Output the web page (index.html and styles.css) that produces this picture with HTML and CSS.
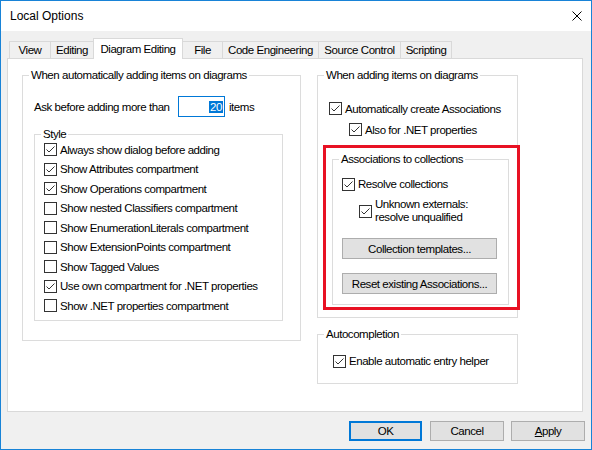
FILE: index.html
```html
<!DOCTYPE html>
<html>
<head>
<meta charset="utf-8">
<title>Local Options</title>
<link rel="stylesheet" href="styles.css">
</head>
<body>
<div class="window">
  <div class="titlebar">
    <span class="title">Local Options</span>
    <svg class="close" viewBox="0 0 10 10" width="10" height="10"><path d="M0.5 0.5 L9.5 9.5 M9.5 0.5 L0.5 9.5" stroke="#000" stroke-width="1" fill="none"/></svg>
  </div>
  <div class="client">
    <div class="tabs">
      <div class="tab t-view">View</div>
      <div class="tab t-edit">Editing</div>
      <div class="tab t-diag sel">Diagram Editing</div>
      <div class="tab t-file">File</div>
      <div class="tab t-code">Code Engineering</div>
      <div class="tab t-src">Source Control</div>
      <div class="tab t-scr last">Scripting</div>
    </div>
    <div class="panel">
      <fieldset class="group g-auto">
        <legend>When automatically adding items on diagrams</legend>
        <div class="ask-row">
          <span class="ask-label">Ask before adding more than</span>
          <span class="num"><span class="numsel">20</span></span>
          <span class="items">items</span>
        </div>
        <fieldset class="group g-style">
          <legend>Style</legend>
          <div class="list">
            <div class="chk"><span class="box"><svg viewBox="0 0 11 11" width="11" height="11"><path d="M1.5 5.5 L4 8 L9.5 2.5" fill="none" stroke="#333" stroke-width="1"/></svg></span>Always show dialog before adding</div>
            <div class="chk"><span class="box"><svg viewBox="0 0 11 11" width="11" height="11"><path d="M1.5 5.5 L4 8 L9.5 2.5" fill="none" stroke="#333" stroke-width="1"/></svg></span>Show Attributes compartment</div>
            <div class="chk"><span class="box"><svg viewBox="0 0 11 11" width="11" height="11"><path d="M1.5 5.5 L4 8 L9.5 2.5" fill="none" stroke="#333" stroke-width="1"/></svg></span>Show Operations compartment</div>
            <div class="chk"><span class="box"></span>Show nested Classifiers compartment</div>
            <div class="chk"><span class="box"></span>Show EnumerationLiterals compartment</div>
            <div class="chk"><span class="box"></span>Show ExtensionPoints compartment</div>
            <div class="chk"><span class="box"></span>Show Tagged Values</div>
            <div class="chk"><span class="box"><svg viewBox="0 0 11 11" width="11" height="11"><path d="M1.5 5.5 L4 8 L9.5 2.5" fill="none" stroke="#333" stroke-width="1"/></svg></span>Use own compartment for .NET properties</div>
            <div class="chk"><span class="box"></span>Show .NET properties compartment</div>
          </div>
        </fieldset>
      </fieldset>
      <div class="col-right">
        <fieldset class="group g-add">
          <legend>When adding items on diagrams</legend>
          <div class="chk r-auto"><span class="box"><svg viewBox="0 0 11 11" width="11" height="11"><path d="M1.5 5.5 L4 8 L9.5 2.5" fill="none" stroke="#333" stroke-width="1"/></svg></span>Automatically create Associations</div>
          <div class="chk r-net"><span class="box"><svg viewBox="0 0 11 11" width="11" height="11"><path d="M1.5 5.5 L4 8 L9.5 2.5" fill="none" stroke="#333" stroke-width="1"/></svg></span>Also for .NET properties</div>
          <fieldset class="group g-assoc">
            <legend>Associations to collections</legend>
            <div class="assoc-body">
              <div class="chk r-res"><span class="box"><svg viewBox="0 0 11 11" width="11" height="11"><path d="M1.5 5.5 L4 8 L9.5 2.5" fill="none" stroke="#333" stroke-width="1"/></svg></span>Resolve collections</div>
              <div class="chk r-unk"><span class="box"><svg viewBox="0 0 11 11" width="11" height="11"><path d="M1.5 5.5 L4 8 L9.5 2.5" fill="none" stroke="#333" stroke-width="1"/></svg></span><span class="two">Unknown externals:<br>resolve unqualified</span></div>
              <button class="btn wide">Collection templates...</button>
              <button class="btn wide">Reset existing Associations...</button>
            </div>
          </fieldset>
        </fieldset>
        <fieldset class="group g-comp">
          <legend>Autocompletion</legend>
          <div class="chk r-helper"><span class="box"><svg viewBox="0 0 11 11" width="11" height="11"><path d="M1.5 5.5 L4 8 L9.5 2.5" fill="none" stroke="#333" stroke-width="1"/></svg></span>Enable automatic entry helper</div>
        </fieldset>
      </div>
    </div>
    <div class="actions">
      <button class="btn b-ok default">OK</button>
      <button class="btn b-cancel">Cancel</button>
      <button class="btn b-apply"><u>A</u>pply</button>
    </div>
  </div>
  <div class="annot"></div>
</div>
</body>
</html>
```
FILE: styles.css
```css
* { box-sizing: border-box; }
html, body { margin: 0; padding: 0; background: #fff; }
body {
  font-family: "Liberation Sans", Arial, sans-serif;
  font-size: 11.5px;
  letter-spacing: -0.45px;
  color: #000;
}
.window {
  position: relative;
  width: 592px;
  height: 450px;
  border: 1px solid #1883d7;
  background: #f0f0f0;
  display: flex;
  flex-direction: column;
  overflow: hidden;
}
.titlebar {
  height: 30px;
  flex: none;
  background: #fff;
  display: flex;
  align-items: center;
  justify-content: space-between;
  padding: 0 9px 0 9px;
}
.title { font-size: 12px; letter-spacing: 0; }
.close { display: block; }
.client {
  flex: 1;
  padding: 7px 0 0 6px;
  display: flex;
  flex-direction: column;
}
.tabs {
  display: flex;
  align-items: flex-end;
  height: 21px;
  padding-left: 2px;
  margin-bottom: -1px;
  position: relative;
  z-index: 1;
}
.tab {
  height: 17px;
  margin-bottom: 1px;
  background: #f0f0f0;
  border: 1px solid #d9d9d9;
  border-bottom: none;
  border-right: none;
  display: flex;
  align-items: center;
  justify-content: center;
  white-space: nowrap;
}
.tab.sel {
  height: 21px;
  margin-bottom: 0;
  background: #fff;
  border-right: 1px solid #d9d9d9;
}
.tab.last { border-right: 1px solid #d9d9d9; }
.t-view { width: 41px; }
.t-edit { width: 43px; }
.t-diag { width: 90px; }
.t-file { width: 39px; border-left: none; }
.t-code { width: 96px; }
.t-src { width: 82px; }
.t-scr { width: 52px; }

.panel {
  width: 576px;
  height: 354px;
  background: #fff;
  border: 1px solid #d9d9d9;
  display: flex;
  align-items: flex-start;
  gap: 16px;
  padding: 9px 0 0 14px;
}
.group {
  margin: 0;
  padding: 0;
  border: 1px solid #dcdcdc;
  min-width: 0;
}
.group > legend {
  margin-left: 6px;
  padding: 0 2px;
  height: 15px;
  line-height: 15px;
  white-space: nowrap;
}
.g-auto { width: 279px; padding-bottom: 19px; }
.ask-row {
  display: flex;
  align-items: center;
  height: 21px;
  margin-top: 13px;
  padding-left: 11px;
}
.ask-label { width: 144px; flex: none; }
.num {
  width: 47px;
  height: 21px;
  flex: none;
  border: 1px solid #0078d7;
  background: #fff;
  display: flex;
  align-items: center;
  justify-content: flex-end;
  padding-right: 1px;
}
.numsel {
  background: #0078d7;
  color: #fff;
  line-height: 12px;
  padding: 0 1px;
}
.items { margin-left: 4px; }
.g-style { width: 249px; margin: 10px 0 0 11px; padding-bottom: 4.5px; }
.list { margin-top: -2px; padding-left: 9px; }
.chk {
  display: flex;
  align-items: center;
  height: 19.5px;
  white-space: nowrap;
}
.box {
  width: 13px;
  height: 13px;
  flex: none;
  border: 1px solid #333;
  background: #fff;
  margin-right: 3px;
  display: flex;
}
.box svg { display: block; }

.col-right { width: 201px; display: flex; flex-direction: column; }
.g-add { padding-bottom: 12px; }
.r-auto { height: 21px; margin-top: 15px; padding-left: 11px; }
.r-net { height: 21px; padding-left: 31px; }
.g-assoc { width: 177px; margin: 12px 0 0 14px; }
.assoc-body { padding: 0 0 10px 9px; display: flex; flex-direction: column; align-items: flex-start; }
.r-res { height: 20px; margin-top: 7px; }
.r-unk { height: 26px; margin-top: 4px; padding-left: 17px; }
.two { line-height: 13px; }
.btn {
  font: inherit;
  letter-spacing: inherit;
  color: #000;
  height: 20px;
  padding: 0;
  background: #e1e1e1;
  border: 1px solid #adadad;
  display: flex;
  align-items: center;
  justify-content: center;
}
.btn.wide { width: 155px; height: 21px; margin-top: 14px; }
.g-comp { margin-top: 9px; }
.r-helper { height: 20px; margin: 9px 0 12px 0; padding-left: 15px; }

.actions {
  display: flex;
  justify-content: flex-end;
  margin-top: 9px;
  padding-right: 6px;
}
.b-ok { width: 73px; }
.b-cancel { width: 74px; margin-left: 8px; }
.b-apply { width: 74px; margin-left: 7px; }
.btn.default { border: 2px solid #0078d7; }

.annot {
  position: absolute;
  left: 322px;
  top: 144px;
  width: 197px;
  height: 165px;
  border: 3px solid #e81123;
  pointer-events: none;
}
```
